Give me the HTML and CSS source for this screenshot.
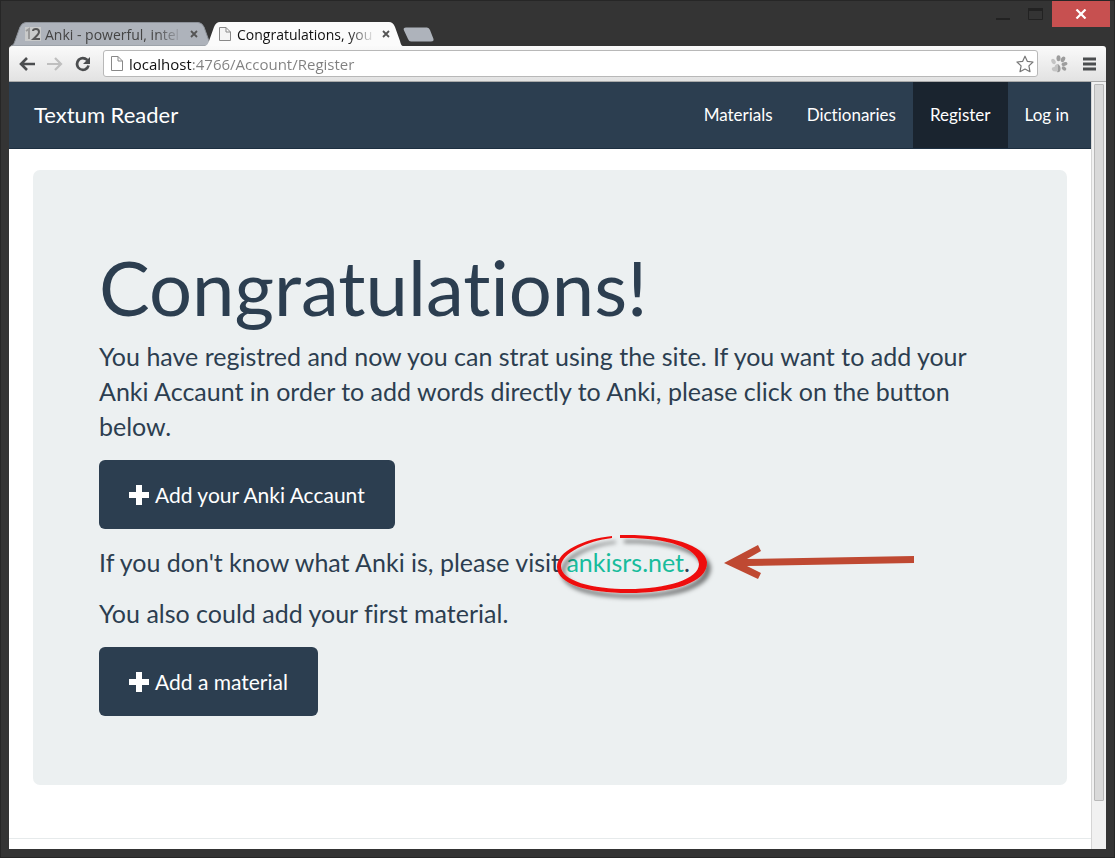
FILE: index.html
```html
<!DOCTYPE html>
<html lang="en">
<head>
<meta charset="utf-8">
<title>Congratulations, you</title>
<link rel="stylesheet" href="styles.css">
</head>
<body>
<div class="window">
  <header class="titlebar">
    <div class="tabs">
      <div class="tab">
        <svg class="tab-shape" viewBox="0 0 198 24" preserveAspectRatio="none"><path d="M0 24C3 23 3 21 4 19L9 5Q11 0.500 15 0.500H187Q191 0.500 193 5L198 19V24Z" fill="#aeb3bb" stroke="#8d9299"/></svg>
        <svg class="favicon" width="16" height="14" viewBox="0 0 16 14"><rect width="16" height="14" fill="#c9caca"/><path d="M1 4L4 2V12" fill="none" stroke="#999" stroke-width="2"/><path d="M8 4Q8 2 11 2Q14 2 14 5Q14 7 8.500 12H15" fill="none" stroke="#555" stroke-width="2"/></svg>
        <span class="tab-title">Anki - powerful, intel</span>
        <button class="tab-close" aria-label="Close tab"><svg width="8" height="8" viewBox="0 0 8 8"><path d="M1 1L7 7M7 1L1 7" stroke="#555" stroke-width="1.800"/></svg></button>
      </div>
      <div class="tab tab-active">
        <svg class="tab-shape" viewBox="0 0 198 24" preserveAspectRatio="none"><path d="M0 24C3 23 3 21 4 19L9 5Q11 0 15 0H184Q188 0 190 5L195 19Q196 24 198 24Z" fill="#fbfbfb"/></svg>
        <svg class="favicon" width="12" height="14" viewBox="0 0 12 14"><path d="M0.500 0.500H7L11.500 5V13.500H0.500ZM7 0.500V5H11.500" fill="#f4f4f4" stroke="#888"/></svg>
        <span class="tab-title">Congratulations, you</span>
        <button class="tab-close" aria-label="Close tab"><svg width="8" height="8" viewBox="0 0 8 8"><path d="M1 1L7 7M7 1L1 7" stroke="#555" stroke-width="1.800"/></svg></button>
      </div>
      <button class="new-tab" aria-label="New tab"><svg width="31" height="15" viewBox="0 0 31 15"><path d="M3 0.500H24Q26 0.500 27 3L30.500 12Q31 14.500 28 14.500H8Q6 14.500 5 12L0.800 3Q0 0.500 3 0.500Z" fill="#aeb3bb"/></svg></button>
    </div>
    <div class="controls">
      <button class="control" aria-label="Minimize"><svg width="16" height="12" viewBox="0 0 16 12"><path d="M1 11H15" stroke="#222" stroke-width="2"/></svg></button>
      <button class="control" aria-label="Maximize"><svg width="16" height="12" viewBox="0 0 16 12"><path d="M0.500 1.500H14.500V11.500H0.500Z" fill="none" stroke="#222"/><path d="M0 1.500H15" stroke="#222" stroke-width="3"/></svg></button>
      <button class="control control-close" aria-label="Close"><svg width="12" height="10" viewBox="0 0 12 10"><path d="M1.500 0.500L10.500 9.500M10.500 0.500L1.500 9.500" stroke="#fff" stroke-width="2.200"/></svg></button>
    </div>
  </header>
  <div class="toolbar">
    <button class="tool" aria-label="Back"><svg width="16" height="14" viewBox="0 0 16 14"><path d="M8 1L2 7L8 13M2 7H16" fill="none" stroke="#4b4d4f" stroke-width="2.600"/></svg></button>
    <button class="tool" aria-label="Forward"><svg width="16" height="14" viewBox="0 0 16 14"><path d="M8 1L14 7L8 13M14 7H0" fill="none" stroke="#bfbfbf" stroke-width="2.200"/></svg></button>
    <button class="tool" aria-label="Reload"><svg width="16" height="16" viewBox="0 0 16 16"><path d="M12.500 4Q8 0.500 4 3.500Q0.500 7.500 3.200 11.500Q6 14.800 10 13.500Q13 12 13.500 9.500" fill="none" stroke="#4b4d4f" stroke-width="2.700"/><path d="M15 1V8H8Z" fill="#4b4d4f"/></svg></button>
    <div class="address">
      <svg width="12" height="15" viewBox="0 0 12 15"><path d="M0.500 0.500H7L11.500 5V14.500H0.500ZM7 0.500V5H11.500" fill="#fff" stroke="#888"/></svg>
      <input class="url" type="text" aria-label="Address" value="localhost:4766/Account/Register">
      <button class="star" aria-label="Bookmark"><svg width="18" height="18" viewBox="0 0 18 18"><path d="M9 1.200L11.400 6.400L17 7L12.900 10.900L14 16.700L9 14L4 16.700L5.100 10.900L1 7L6.600 6.400Z" fill="#fff" stroke="#777" stroke-width="1.200" stroke-linejoin="round"/></svg></button>
    </div>
    <button class="tool" aria-label="Extension"><svg width="18" height="18" viewBox="0 0 18 18"><g fill="#9d9d9d"><ellipse cx="8.500" cy="3.200" rx="2" ry="3"/><ellipse cx="13" cy="4.300" rx="2" ry="3" transform="rotate(28 13 4.300)"/><ellipse cx="3.500" cy="6.500" rx="2" ry="2.800" transform="rotate(-30 3.500 6.500)" fill="#c4c4c4"/><ellipse cx="14.500" cy="9" rx="3" ry="1.800" transform="rotate(-15 14.500 9)"/><ellipse cx="14" cy="13.500" rx="2.500" ry="1.800" transform="rotate(35 14 13.500)"/><path d="M8 9Q11 11 10.500 15Q9.500 18 7 17V9Z"/></g><path d="M8 9Q5 9 4.500 12Q1 12 2 15Q3 17 8 16.500Z" fill="#c4c4c4"/></svg></button>
    <button class="tool menu" aria-label="Menu"><svg width="14" height="14" viewBox="0 0 14 14"><path d="M0 2H13M0 7H13M0 12H13" stroke="#4b4d4f" stroke-width="2.800"/></svg></button>
  </div>
  <div class="viewport">
    <div class="page">
      <nav class="navbar">
        <a class="brand" href="#">Textum Reader</a>
        <div class="links">
          <a class="nav-link" href="#">Materials</a>
          <a class="nav-link" href="#">Dictionaries</a>
          <a class="nav-link nav-active" href="#">Register</a>
          <a class="nav-link" href="#">Log in</a>
        </div>
      </nav>
      <main class="jumbotron">
        <h1>Congratulations!</h1>
        <p>You have registred and now you can strat using the site. If you want to add your Anki Accaunt in order to add words directly to Anki, please click on the button below.</p>
        <button class="btn"><svg width="20" height="20" viewBox="0 0 20 20"><path d="M7 0H13V7H20V13H13V20H7V13H0V7H7Z" fill="#fff"/></svg>Add your Anki Accaunt</button>
        <p>If you don't know what Anki is, please visit <span class="marked"><a class="site" href="#">ankisrs.net</a><svg class="mark" width="370" height="80" viewBox="550 528 370 80">
          <defs><filter id="shadow" x="-20%" y="-20%" width="140%" height="150%"><feDropShadow dx="4" dy="5" stdDeviation="2" flood-color="#000" flood-opacity="0.500"/></filter></defs>
          <path filter="url(#shadow)" fill="#ee100c" d="M608 536C580 539 553 551 553 567C553 584 584 593 624 593C668 593 704 583 703 562C701 544 663 534 616 535V538C660 537 694 547 695 564C695 579 663 589 624 589C588 589 557 581 557 566C558 553 583 541 608 538Z"/>
          <path fill="#bf4932" d="M720 563L754 545L757 551L743 559L910 556V563L743 566L757 573L754 579Z"/></svg></span>.</p>
        <p>You also could add your first material.</p>
        <button class="btn"><svg width="20" height="20" viewBox="0 0 20 20"><path d="M7 0H13V7H20V13H13V20H7V13H0V7H7Z" fill="#fff"/></svg>Add a material</button>
      </main>
      <hr class="rule">
    </div>
    <div class="scrollbar"><div class="thumb"></div></div>
  </div>
</div>
</body>
</html>
```
FILE: styles.css
```css
* { box-sizing: border-box; }
body { margin: 0; background: #343434; font-family: Lato, sans-serif; font-variant-ligatures: none; color: #2c3e50; }
button { border: 0; padding: 0; background: none; font: inherit; font-variant-ligatures: none; color: inherit; display: flex; align-items: center; justify-content: center; }
svg { display: block; flex: none; }
a { text-decoration: none; }

.window { min-height: 100vh; display: flex; flex-direction: column; padding: 0 8px 8px; border: 1px solid #262626; }

.titlebar { display: flex; justify-content: space-between; height: 45px; margin-right: -4px; }
.tabs { display: flex; align-items: flex-end; padding-left: 2px; }
.tab { position: relative; isolation: isolate; display: flex; align-items: center; width: 194px; height: 24px; padding-left: 14px; font-family: "Open Sans", sans-serif; font-size: 14px; color: #444; }
.tab-active { width: 198px; color: #111; z-index: 1; }
.tab-shape { position: absolute; inset: 0; width: 198px; height: 24px; z-index: -1; }
.favicon { margin-right: 4px; }
.tab-active .favicon { margin-right: 6px; }
.tab-title { width: 138px; white-space: nowrap; mask-image: linear-gradient(90deg, #000 80%, transparent); }
.tab-close { width: 12px; height: 16px; margin-left: 5px; }
.new-tab { height: 24px; }
.controls { display: flex; align-items: flex-start; }
.control { width: 33px; height: 26px; }
.control-close { width: 58px; background: #c75050; }

.toolbar { display: flex; align-items: center; height: 36px; padding: 0 9px 0 10px; gap: 12px; background: linear-gradient(#fafafa, #e2e2e2); border-bottom: 1px solid #aaa; border-radius: 3px 3px 0 0; }
.menu { margin-left: 3px; }
.address { flex: 1; display: flex; align-items: center; height: 27px; padding: 0 3px 0 7px; gap: 6px; border: 1px solid #b8b8b8; border-radius: 3px; background: #fff; }
.url { flex: 1; min-width: 0; border: 0; padding: 0; outline: 0; font: 15px "Open Sans", sans-serif; background: linear-gradient(90deg, #111 62px, #808080 62px); background-clip: text; -webkit-text-fill-color: transparent; }

.viewport { flex: 1; display: flex; background: #fff; }
.page { flex: 1; display: flex; flex-direction: column; }
.navbar { display: flex; justify-content: space-between; padding: 0 5px 0 25px; background: #2c3e50; border-bottom: 1px solid #1d2f41; }
.brand { font-size: 22px; line-height: 66px; color: #fff; }
.links { display: flex; }
.nav-link { padding: 0 17px; font-size: 17px; line-height: 66px; color: #fff; }
.nav-active { background: #1a242f; }
.jumbotron { margin: 21px 24px 0; padding: 80px 66px 69px; border-radius: 7px; background: #ecf0f1; }
h1 { margin: 0 0 15px; font-size: 76px; line-height: 74px; font-weight: 400; }
p { margin: 0 0 16px; font-size: 25px; line-height: 35px; }
.btn { height: 69px; margin-bottom: 16px; padding: 0 30px; gap: 6px; border-radius: 6px; background: #2c3e50; color: #fff; font-size: 21px; }
.btn:last-child { margin-bottom: 0; }
.marked { position: relative; display: inline-block; }
.site { color: #18bc9c; }
.mark { position: absolute; left: -12px; top: -17px; pointer-events: none; }
.rule { width: 100%; margin: auto 0 10px; border: 0; border-top: 1px solid #e6eaeb; }
.scrollbar { width: 15px; padding: 2px; border-left: 1px solid #d5d5d5; background: #f1f1f1; }
.thumb { height: 94%; border: 1px solid #b8b8b8; border-radius: 1px; background: #d9d9d9; }
```
